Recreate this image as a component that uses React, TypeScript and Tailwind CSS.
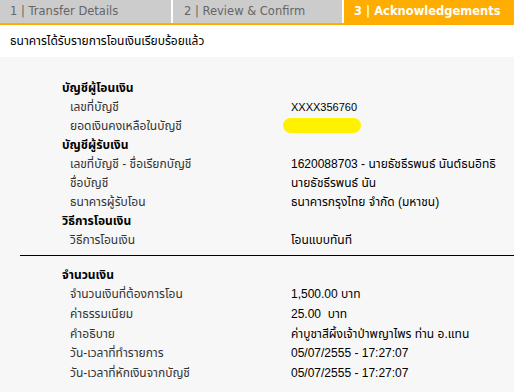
const thai = { fontFamily: '"Liberation Sans", "Noto Sans Thai", "Noto Sans", sans-serif' };

type Row = { label: string; value?: React.ReactNode };
type Section = { title: string; rows: Row[] };

const top: Section[] = [
  {
    title: "บัญชีผู้โอนเงิน",
    rows: [
      { label: "เลขที่บัญชี", value: <span className="text-[11px]">XXXX356760</span> },
      {
        label: "ยอดเงินคงเหลือในบัญชี",
        value: <span className="block h-[15px] w-[78px] -ml-[8px] rounded-full bg-[#fff200]" />,
      },
    ],
  },
  {
    title: "บัญชีผู้รับเงิน",
    rows: [
      { label: "เลขที่บัญชี - ชื่อเรียกบัญชี", value: "1620088703 - นายธัชธีรพนธ์ นันต์ธนอิทธิ" },
      { label: "ชื่อบัญชี", value: "นายธัชธีรพนธ์ นัน" },
      { label: "ธนาคารผู้รับโอน", value: "ธนาคารกรุงไทย จำกัด (มหาชน)" },
    ],
  },
  {
    title: "วิธีการโอนเงิน",
    rows: [{ label: "วิธีการโอนเงิน", value: "โอนแบบทันที" }],
  },
];

const amount: Section = {
  title: "จำนวนเงิน",
  rows: [
    { label: "จำนวนเงินที่ต้องการโอน", value: "1,500.00 บาท" },
    { label: "ค่าธรรมเนียม", value: "25.00  บาท" },
    { label: "คำอธิบาย", value: "ค่าบูชาสีผึ้งเจ้าป่าพญาไพร ท่าน อ.แทน" },
    { label: "วัน-เวลาที่ทำรายการ", value: "05/07/2555 - 17:27:07" },
    { label: "วัน-เวลาที่หักเงินจากบัญชี", value: "05/07/2555 - 17:27:07" },
  ],
};

function Block({ s, h }: { s: Section; h: string }) {
  return (
    <div>
      <div className={`${h} flex items-center pl-[62px] font-bold text-black`}>{s.title}</div>
      {s.rows.map((r) => (
        <div key={r.label} className={`${h} flex items-center`}>
          <div className="w-[291px] shrink-0 pl-[70px] text-[#333]">{r.label}</div>
          <div className="text-black whitespace-pre">{r.value}</div>
        </div>
      ))}
    </div>
  );
}

export default function App() {
  return (
    <div className="w-[514px] h-[392px] overflow-hidden bg-white text-[12px]" style={thai}>
      {/* Steps */}
      <div className="flex h-[23px] gap-[2px] bg-white" style={{ fontFamily: '"DejaVu Sans", Verdana, sans-serif' }}>
        <div className="flex w-[171px] items-center bg-[#cccccc] pl-[10px] text-[11.5px] text-[#666]">1 | Transfer Details</div>
        <div className="flex w-[169px] items-center bg-[#cccccc] pl-[11px] text-[11.5px] text-[#666]">2 | Review &amp; Confirm</div>
        <div className="flex flex-1 items-center bg-[#ffad00] pl-[10px] text-[11.5px] font-bold text-white">3 | Acknowledgements</div>
      </div>
      <div className="h-[2px] bg-[#ffad00]" />

      <div className="flex h-[32px] items-center pl-[10px] text-black">ธนาคารได้รับรายการโอนเงินเรียบร้อยแล้ว</div>

      <div className="h-full bg-[#f7f7f7] pt-[21px]">
        {top.map((s) => (
          <Block key={s.title} s={s} h="h-[19px]" />
        ))}
        <div className="ml-[20px] mt-[6px] mb-[9px] border-t border-black" />
        <Block s={amount} h="h-[19.6px]" />
      </div>
    </div>
  );
}
